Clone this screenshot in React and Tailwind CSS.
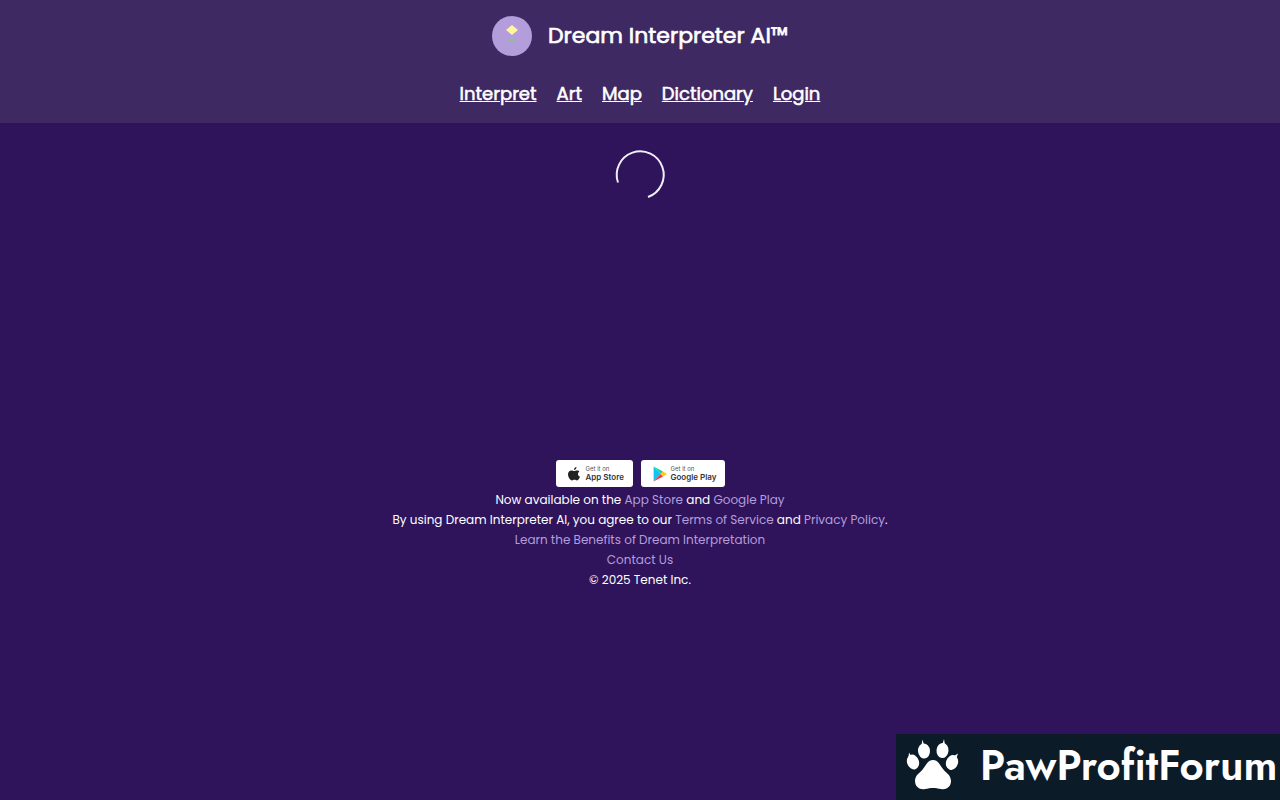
const navItems = ["Interpret", "Art", "Map", "Dictionary", "Login"];

function Logo() {
  return (
    <svg className="size-10 shrink-0" viewBox="0 0 40 40" aria-hidden="true">
      <circle cx="20" cy="20" r="20" fill="#b39ddb" />
      <path d="M20 9 L26 14 L20 19 L14 14 Z" fill="#fff59d" />
      <path d="M16 25 H24" stroke="#81c784" strokeWidth="1.6" />
    </svg>
  );
}

function AppleIcon() {
  return (
    <svg className="h-4 w-3 shrink-0" viewBox="0 0 12 16" fill="#222" aria-hidden="true">
      <path d="M8.5 1 C8.6 2.5 7.4 4 5.9 4 C5.8 2.5 7 1.2 8.5 1 Z" />
      <path d="M11.5 5.6 C9.3 7 9.6 9.8 12 10.8 C11.4 12.5 10.2 14.4 9 14.4 C8 14.4 7.6 13.8 6.4 13.8 C5.2 13.8 4.8 14.4 3.9 14.4 C2.3 14.4 0 11.2 0 8.3 C0 5.8 1.6 4.4 3.4 4.4 C4.6 4.4 5.4 5.1 6.2 5.1 C7 5.1 7.9 4.3 9.3 4.4 C10.2 4.4 11 4.9 11.5 5.6 Z" />
    </svg>
  );
}

function PlayIcon() {
  return (
    <svg className="h-4 w-[14px] shrink-0" viewBox="0 0 14 16" aria-hidden="true">
      <path d="M0.6 0.6 L7.6 8 L0.6 15.4 Z" fill="#10c4f0" />
      <path d="M0.6 0.6 L10 5.6 L7.6 8 Z" fill="#12d6a0" />
      <path d="M0.6 15.4 L10 10.4 L7.6 8 Z" fill="#f0384c" />
      <path d="M10 5.6 L14 8 L10 10.4 L7.6 8 Z" fill="#ffc914" />
    </svg>
  );
}

function StoreBadge({ icon, name, className }) {
  return (
    <a href="#" className={`flex h-[27px] items-center rounded-[3px] bg-white pl-3 font-['Inter',sans-serif] text-[#333] ${className}`}>
      {icon}
      <span className="flex flex-col text-left">
        <span className="text-[6px] leading-[7px] text-[#555]">Get it on</span>
        <span className="text-[8px] leading-[10px] font-semibold whitespace-nowrap">{name}</span>
      </span>
    </a>
  );
}

function FooterLink({ children }) {
  return <a href="#" className="text-[#b39ddb]">{children}</a>;
}

function Paw() {
  return (
    <svg className="mb-[6px] h-[54px] w-[54px] shrink-0" viewBox="0 0 54 54" fill="#fff" aria-hidden="true">
      <path d="M27 23 C32 23 34 28 37 32 C40 36 45 38 45 44 C45 50 40 53 35 52 C29 50.500 25 50.500 19 52 C14 53 9 50 9 44 C9 38 14 36 17 32 C20 28 22 23 27 23 Z" />
      <ellipse cx="7" cy="25" rx="6" ry="7.500" transform="rotate(-18 7 25)" />
      <ellipse cx="18" cy="14" rx="6" ry="7.500" transform="rotate(-5 18 14)" />
      <ellipse cx="36.500" cy="13.500" rx="6" ry="7.500" transform="rotate(5 36.500 13.500)" />
      <ellipse cx="46" cy="25.500" rx="6" ry="7.500" transform="rotate(18 46 25.500)" />
      <path d="M2.500 20 L3 15.500 L5 19 Z M15.500 8 L16.500 2.500 L18 8 Z M36.500 7 L38 2 L39 8 Z M48 19 L52 16.500 L50.500 21 Z" />
    </svg>
  );
}

export default function App() {
  return (
    <div className="min-h-screen bg-[#2f145b] font-['Poppins','Inter',sans-serif] text-white">
      <header className="flex flex-col items-center gap-6 bg-[#3f2962] py-4">
        <div className="flex items-center gap-4">
          <Logo />
          <h1 className="text-[22px] leading-8 font-normal [-webkit-text-stroke:0.03em_white]">Dream Interpreter AI™</h1>
        </div>
        <nav className="flex gap-5 text-[18px] leading-[27px] font-normal [-webkit-text-stroke:0.03em_white]">
          {navItems.map((item) => (
            <a key={item} href="#" className="underline">{item}</a>
          ))}
        </nav>
      </header>

      <main className="flex h-[337px] justify-center pt-7">
        <svg className="size-12 overflow-visible" viewBox="0 0 48 48" role="img" aria-label="Loading">
          <path d="M2 31.500 A23.500 23.500 0 1 1 32 46" fill="none" stroke="#f1edf6" strokeWidth="2" />
        </svg>
      </main>

      <footer className="flex flex-col items-center text-center text-[12px] leading-5">
        <div className="mb-[3px] flex gap-2">
          <StoreBadge icon={<AppleIcon />} name="App Store" className="w-[77px] gap-[6px]" />
          <StoreBadge icon={<PlayIcon />} name="Google Play" className="w-[84px] gap-1" />
        </div>
        <p>Now available on the <FooterLink>App Store</FooterLink> and <FooterLink>Google Play</FooterLink></p>
        <p>By using Dream Interpreter AI, you agree to our <FooterLink>Terms of Service</FooterLink> and <FooterLink>Privacy Policy</FooterLink>.</p>
        <p><FooterLink>Learn the Benefits of Dream Interpretation</FooterLink></p>
        <p><FooterLink>Contact Us</FooterLink></p>
        <p>© 2025 Tenet Inc.</p>
      </footer>

      <aside className="fixed right-0 bottom-0 flex h-[66px] w-96 items-center gap-5 bg-[#0c1b28] pl-[10px]">
        <Paw />
        <span className="pb-[2px] font-['Jost','Lato',sans-serif] text-[42px] leading-[64px] font-semibold whitespace-nowrap">PawProfitForum</span>
      </aside>
    </div>
  );
}
